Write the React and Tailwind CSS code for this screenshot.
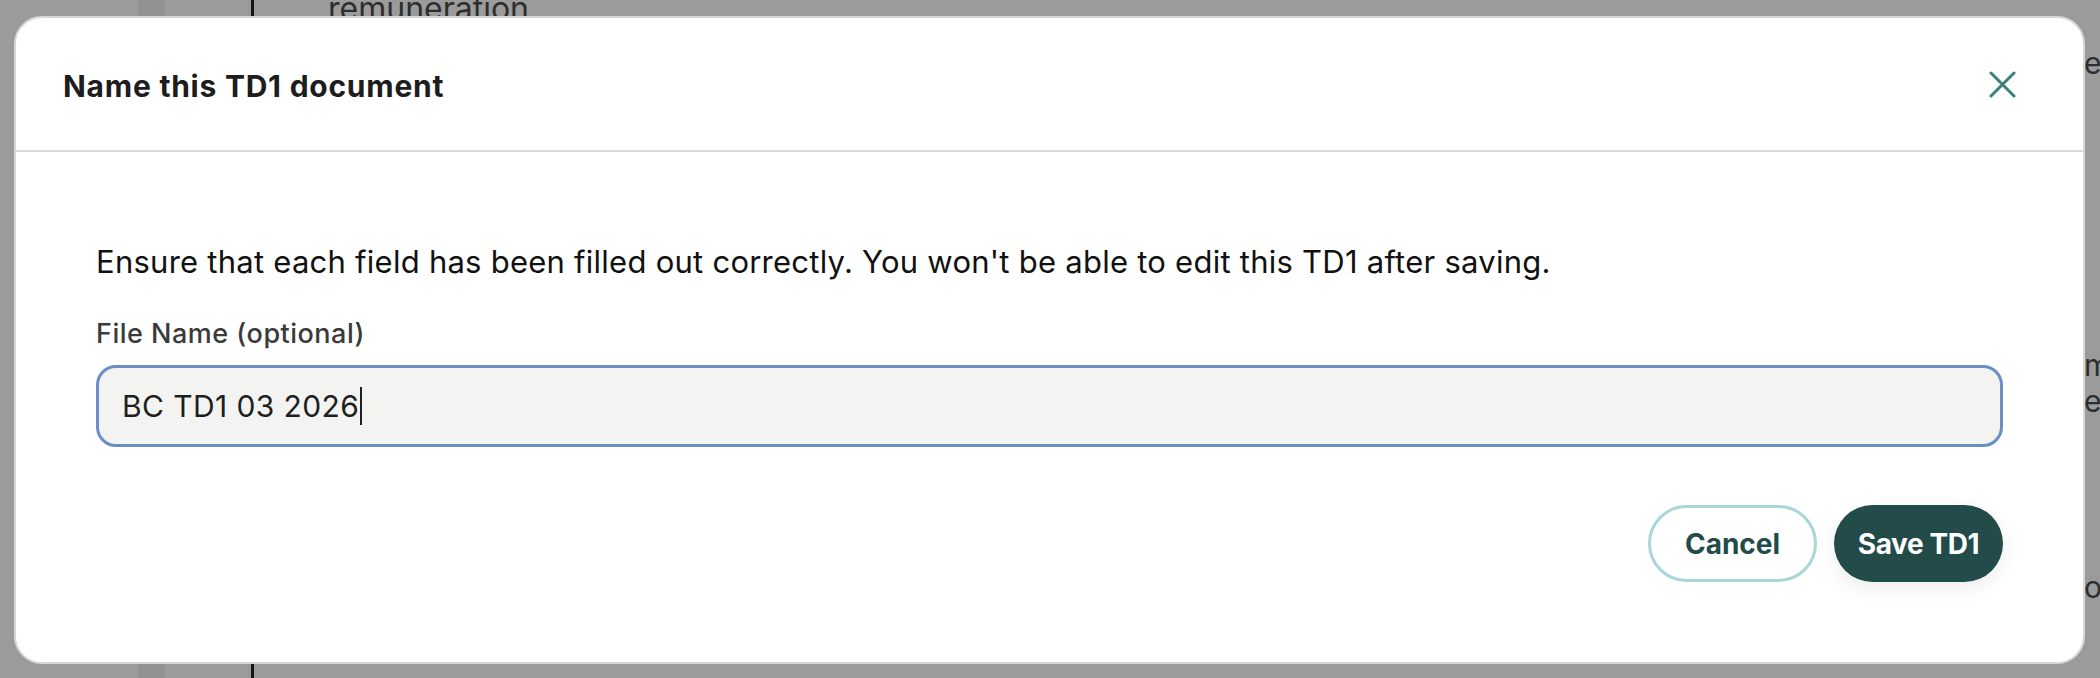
import { useState } from "react";

const font = { fontFamily: "Inter, 'Noto Sans', sans-serif" };

function CloseIcon() {
  return (
    <svg width="27" height="27" viewBox="0 0 27 27" fill="none" aria-hidden="true">
      <path
        d="M2 2L25 25M25 2L2 25"
        stroke="#3c7f7d"
        strokeWidth="3"
        strokeLinecap="round"
      />
    </svg>
  );
}

// Page behind the overlay, only the bits that peek out round the modal
function Backdrop() {
  return (
    <div className="flex h-full w-full text-[#2e2e2e]">
      <div className="w-[138px] shrink-0" />
      <div className="w-[27px] shrink-0 bg-[#929292]" />
      <div className="w-[86px] shrink-0" />
      <div className="flex-1 border-l-[3px] border-[#161616] pl-[74px]">
        <p className="-mt-[9px] text-[32px] leading-[36px]">remuneration</p>
      </div>
      <div className="flex w-[16px] shrink-0 flex-col overflow-hidden text-[30px] leading-[36px]">
        <span className="mt-[45px]">e</span>
        <span className="mt-[266px]">m</span>
        <span>e</span>
        <span className="mt-[150px]">o</span>
      </div>
    </div>
  );
}

export default function App() {
  const [name] = useState("BC TD1 03 2026");

  return (
    <div className="relative h-[678px] w-[2100px] overflow-hidden bg-[#9b9b9b]" style={font}>
      <Backdrop />

      {/* Modal */}
      <div className="absolute left-[14px] top-[16px] flex h-[648px] w-[2071px] flex-col rounded-[28px] border-2 border-[#d8d8d8] bg-white">
        <div className="flex h-[134px] shrink-0 items-center justify-between border-b-2 border-[#dadada] pl-[47px] pr-[67px] pt-[3px]">
          <h2 className="text-[30px] font-bold leading-[36px] tracking-[0.75px] text-[#1d1d1d]">
            Name this TD1 document
          </h2>
          <button type="button" aria-label="Close" className="-mt-[3px] flex items-center">
            <CloseIcon />
          </button>
        </div>

        <div className="flex flex-1 flex-col px-[80px] pt-[92px]">
          <p className="text-[31px] leading-[36px] tracking-[0.25px] text-[#111]">
            Ensure that each field has been filled out correctly. You won't be able to edit this TD1 after saving.
          </p>

          <label className="mt-[38px] text-[27px] font-medium leading-[32px] tracking-[0.5px] text-[#3a3a3a]">
            File Name (optional)
          </label>

          <div className="mt-[15px] flex h-[82px] items-center rounded-[20px] border-[3px] border-[#6a8fc5] bg-[#f3f3f2] pl-[23px] pr-6">
            <span className="text-[30px] leading-[36px] tracking-[0.4px] text-[#1f1f1f]">{name}</span>
            <span className="ml-[1px] h-[38px] w-[2px] bg-[#222]" />
          </div>

          <div className="mt-[58px] flex justify-end gap-[17px]">
            <button
              type="button"
              className="flex h-[77px] w-[169px] items-center justify-center rounded-full border-[3px] border-[#a9d6d6] bg-white text-[28px] font-bold text-[#234b4a]"
            >
              Cancel
            </button>
            <button
              type="button"
              className="flex h-[77px] w-[169px] items-center justify-center rounded-full bg-[#234b4a] text-[28px] font-bold tracking-[-0.4px] text-white shadow-[0_6px_20px_rgba(0,0,0,0.08)]"
            >
              Save TD1
            </button>
          </div>
        </div>
      </div>
    </div>
  );
}
